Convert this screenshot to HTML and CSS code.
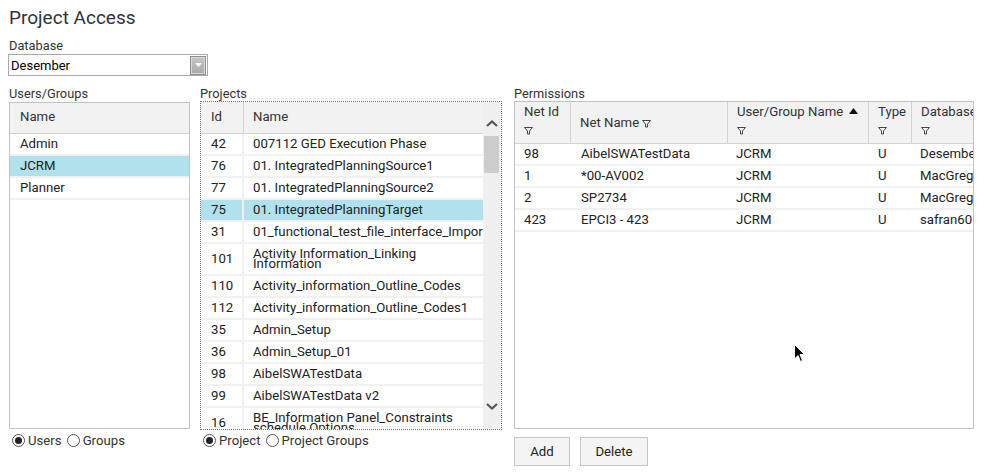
FILE: index.html
```html
<!DOCTYPE html>
<html>
<head>
<meta charset="utf-8">
<title>Project Access</title>
<link rel="stylesheet" href="styles.css">
</head>
<body>
<div class="page">
  <h1 class="title">Project Access</h1>
  <div class="field-label">Database</div>
  <div class="select">
    <span class="select-value">Desember</span>
    <span class="select-btn"><svg width="7" height="4" viewBox="0 0 7 4"><path d="M0 0 H7 L3.5 4 Z" fill="#fff"/></svg></span>
  </div>

  <div class="panels">
    <section class="panel panel-users">
      <div class="panel-label">Users/Groups</div>
      <div class="box box-users">
        <table class="grid grid-users">
          <thead><tr><th>Name</th></tr></thead>
          <tbody>
            <tr><td>Admin</td></tr>
            <tr class="sel"><td>JCRM</td></tr>
            <tr><td>Planner</td></tr>
          </tbody>
        </table>
      </div>
      <div class="radios">
        <label class="radio"><span class="dot on"></span>Users</label>
        <label class="radio"><span class="dot"></span>Groups</label>
      </div>
    </section>

    <section class="panel panel-projects">
      <div class="panel-label">Projects</div>
      <div class="box box-projects">
        <div class="proj-main">
          <table class="grid grid-proj">
            <colgroup><col class="c-id"><col></colgroup>
            <thead><tr><th>Id</th><th>Name</th></tr></thead>
            <tbody>
              <tr><td>42</td><td>007112 GED Execution Phase</td></tr>
              <tr><td>76</td><td>01. IntegratedPlanningSource1</td></tr>
              <tr><td>77</td><td>01. IntegratedPlanningSource2</td></tr>
              <tr class="sel"><td>75</td><td>01. IntegratedPlanningTarget</td></tr>
              <tr><td>31</td><td>01_functional_test_file_interface_Import</td></tr>
              <tr><td>101</td><td>Activity Information_Linking Information</td></tr>
              <tr><td>110</td><td>Activity_information_Outline_Codes</td></tr>
              <tr><td>112</td><td>Activity_information_Outline_Codes1</td></tr>
              <tr><td>35</td><td>Admin_Setup</td></tr>
              <tr><td>36</td><td>Admin_Setup_01</td></tr>
              <tr><td>98</td><td>AibelSWATestData</td></tr>
              <tr><td>99</td><td>AibelSWATestData v2</td></tr>
              <tr><td>16</td><td>BE_Information Panel_Constraints schedule Options</td></tr>
            </tbody>
          </table>
        </div>
        <div class="scrollbar">
          <svg class="sb-arrow sb-up" width="12" height="7" viewBox="0 0 12 7"><path d="M1 6 L6 1.5 L11 6" fill="none" stroke="#555" stroke-width="2.2"/></svg>
          <div class="sb-thumb"></div>
          <div class="sb-fill"></div>
          <svg class="sb-arrow sb-down" width="12" height="7" viewBox="0 0 12 7"><path d="M1 1 L6 5.5 L11 1" fill="none" stroke="#555" stroke-width="2.2"/></svg>
        </div>
      </div>
      <div class="radios">
        <label class="radio"><span class="dot on"></span>Project</label>
        <label class="radio"><span class="dot"></span>Project Groups</label>
      </div>
    </section>

    <section class="panel panel-perms">
      <div class="panel-label">Permissions</div>
      <div class="box box-perms">
        <table class="grid grid-perm">
          <colgroup><col class="p1"><col class="p2"><col class="p3"><col class="p4"><col class="p5"></colgroup>
          <thead>
            <tr>
              <th><div class="hl">Net Id</div><div class="hf"><svg class="funnel" width="9" height="9" viewBox="0 0 9 9"><path d="M0.5 1.5 H8.5 L5.5 5 V8 H3.5 V5 Z" fill="none" stroke="#444"/></svg></div></th>
              <th class="mid">Net Name <svg class="funnel" width="9" height="9" viewBox="0 0 9 9"><path d="M0.5 1.5 H8.5 L5.5 5 V8 H3.5 V5 Z" fill="none" stroke="#444"/></svg></th>
              <th><div class="hl">User/Group Name <svg class="sort" width="9" height="6" viewBox="0 0 9 6"><path d="M0 6 L4.5 0 L9 6 Z" fill="#111"/></svg></div><div class="hf"><svg class="funnel" width="9" height="9" viewBox="0 0 9 9"><path d="M0.5 1.5 H8.5 L5.5 5 V8 H3.5 V5 Z" fill="none" stroke="#444"/></svg></div></th>
              <th><div class="hl">Type</div><div class="hf"><svg class="funnel" width="9" height="9" viewBox="0 0 9 9"><path d="M0.5 1.5 H8.5 L5.5 5 V8 H3.5 V5 Z" fill="none" stroke="#444"/></svg></div></th>
              <th><div class="hl">Database</div><div class="hf"><svg class="funnel" width="9" height="9" viewBox="0 0 9 9"><path d="M0.5 1.5 H8.5 L5.5 5 V8 H3.5 V5 Z" fill="none" stroke="#444"/></svg></div></th>
            </tr>
          </thead>
          <tbody>
            <tr><td>98</td><td>AibelSWATestData</td><td>JCRM</td><td>U</td><td>Desember</td></tr>
            <tr><td>1</td><td>*00-AV002</td><td>JCRM</td><td>U</td><td>MacGregor</td></tr>
            <tr><td>2</td><td>SP2734</td><td>JCRM</td><td>U</td><td>MacGregor</td></tr>
            <tr><td>423</td><td>EPCI3 - 423</td><td>JCRM</td><td>U</td><td>safran60</td></tr>
          </tbody>
        </table>
      </div>
      <div class="buttons">
        <button class="btn btn-add">Add</button>
        <button class="btn btn-del">Delete</button>
      </div>
    </section>
  </div>

  <svg class="cursor" width="12" height="19" viewBox="0 0 12 19"><path d="M0.5 0.5 V15 L4 11.5 L6.5 17.5 L8.5 16.5 L6 10.5 H10.5 Z" fill="#000" stroke="#fff" stroke-width="1"/></svg>
</div>
</body>
</html>
```

FILE: styles.css
```css
* { box-sizing: border-box; }
html, body { margin: 0; padding: 0; background: #fff; }
body {
  font-family: Roboto, "Liberation Sans", sans-serif;
  color: #222;
  width: 984px;
  height: 476px;
  overflow: hidden;
}
.page {
  position: relative;
  padding: 6px 0 0 9px;
}
.title {
  margin: 0;
  font-size: 19px;
  line-height: 23px;
  font-weight: 400;
  color: #333;
}
.field-label {
  margin-top: 10px;
  font-size: 12.8px;
  line-height: 14px;
  color: #333;
}
.select {
  margin: 1px 0 0 -1px;
  width: 200px;
  height: 22px;
  border: 1px solid #a9a9a9;
  display: flex;
  align-items: center;
  justify-content: space-between;
  padding: 0 1px 0 2px;
  font-size: 13px;
  color: #000;
}
.select-btn {
  width: 16px;
  height: 19px;
  background: linear-gradient(#c6c6c6, #a9a9a9);
  border: 1px solid #8e8e8e;
  box-shadow: inset 0 0 0 1px #dadada;
  display: flex;
  align-items: center;
  justify-content: center;
}
.panels {
  display: flex;
  margin-top: 10px;
}
.panel-users { width: 181px; }
.panel-projects { width: 302px; margin-left: 10px; }
.panel-perms { width: 460px; margin-left: 12px; }
.panel-label {
  font-size: 12.8px;
  line-height: 16px;
  color: #333;
  height: 16px;
}
.box {
  height: 328px;
  overflow: hidden;
  background: #fff;
}
.box-users {
  height: 327px;
  border: 1px solid #c2c2c2;
}
.box-projects {
  margin-top: -1px;
  height: 329px;
  border: 1px dotted #6e6e6e;
  display: flex;
}
.box-perms {
  margin-top: -1px;
  border: 1px solid #c2c2c2;
}
.grid {
  border-collapse: separate;
  border-spacing: 0;
  table-layout: fixed;
  width: 100%;
  font-size: 13.2px;
}
.grid th {
  height: 31px;
  background: #f2f2f2;
  border-bottom: 1px solid #d2d2d2;
  font-weight: 400;
  text-align: left;
  padding: 0 10px 4px;
  color: #333;
  white-space: nowrap;
  overflow: hidden;
}
.grid td {
  padding: 5px 10px;
  line-height: 10px;
  height: 22px;
  border-bottom: 2px solid #f1f1f1;
  overflow: hidden;
  vertical-align: middle;
  color: #222;
}
.grid tr.sel td { background: #b1e1ed; }
.proj-main { width: 282px; overflow: hidden; }
.grid-proj th, .grid-proj td { padding-left: 9px; padding-right: 0; }
.grid-proj th:first-child, .grid-proj td:first-child { padding-left: 10px; }
.grid-proj th { height: 32px; padding-bottom: 3px; }
.grid-proj th:first-child { border-right: 1px solid #d2d2d2; }
.grid-proj td:first-child { border-right: 2px solid #f1f1f1; }
.c-id { width: 43px; }
.scrollbar {
  width: 17px;
  background: #f0f0f0;
  display: flex;
  flex-direction: column;
  align-items: center;
}
.sb-arrow { flex: none; }
.sb-up { margin-top: 18px; }
.sb-thumb {
  margin-top: 9px;
  width: 15px;
  height: 37px;
  background: #cdcdcd;
  flex: none;
}
.sb-fill { flex: 1; }
.sb-down { margin-bottom: 19px; }
.radios {
  display: flex;
  align-items: center;
  height: 16px;
  margin-top: 3px;
  font-size: 13.2px;
  color: #333;
}
.radio {
  display: flex;
  align-items: center;
  margin-right: 5px;
}
.panel-users .radios { margin-left: 3px; }
.panel-projects .radios { margin-left: 3px; margin-top: 2px; }
.dot {
  width: 13px;
  height: 13px;
  border: 1px solid #555;
  border-radius: 50%;
  margin-right: 3px;
  position: relative;
  background: #fff;
}
.dot.on::after {
  content: "";
  position: absolute;
  left: 2px;
  top: 2px;
  width: 7px;
  height: 7px;
  border-radius: 50%;
  background: #222;
}
.grid-perm { width: 500px; }
.p1 { width: 56px; }
.p2 { width: 157px; }
.p3 { width: 141px; }
.p4 { width: 43px; }
.p5 { width: 103px; }
.grid-perm th {
  height: 42px;
  vertical-align: top;
  padding: 1px 0 0 9px;
  border-right: 1px solid #d2d2d2;
}
.grid-perm th.mid { vertical-align: middle; padding-top: 0; }
.grid-perm td { padding-left: 9px; padding-right: 0; white-space: nowrap; }
.grid-perm td:nth-child(2) { padding-left: 10px; }
.grid-perm td:nth-child(3) { padding-left: 8px; }
.grid-perm td:nth-child(4) { padding-left: 9px; }
.grid-perm td:nth-child(5) { padding-left: 8px; }
.hl { line-height: 18px; height: 18px; }
.hf { height: 16px; margin-top: 1px; display: flex; align-items: center; }
.funnel { display: inline-block; vertical-align: middle; }
.sort { display: inline-block; vertical-align: 2px; margin-left: 3px; }
.buttons {
  display: flex;
  margin-top: 8px;
}
.btn {
  height: 29px;
  background: #f4f4f4;
  border: 1px solid #c6c6c6;
  font-family: Roboto, "Liberation Sans", sans-serif;
  font-size: 13.2px;
  color: #222;
  padding: 0;
}
.btn-add { width: 56px; }
.btn-del { width: 68px; margin-left: 10px; }
.cursor {
  position: absolute;
  left: 794px;
  top: 344px;
}
```
